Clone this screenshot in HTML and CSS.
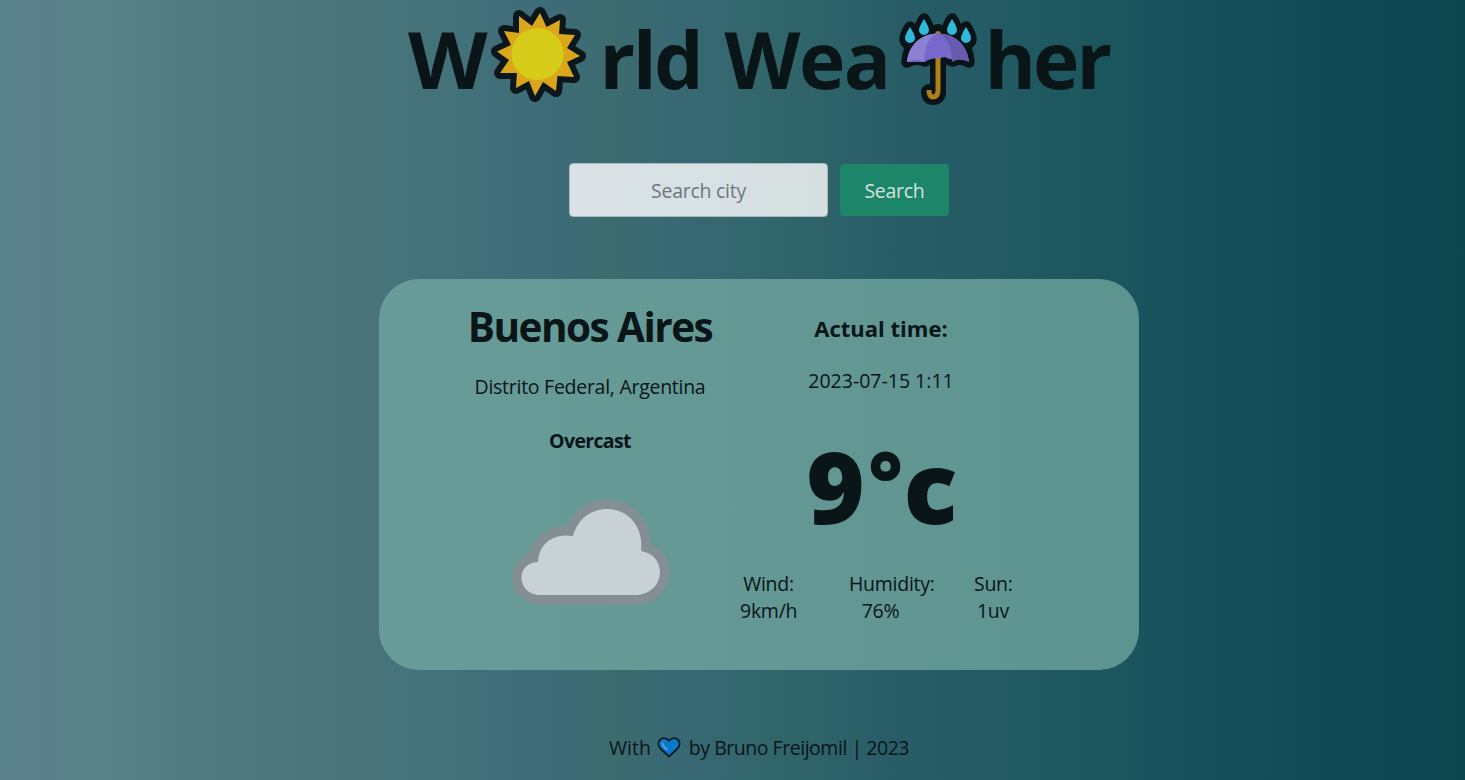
FILE: index.html
```html
<!DOCTYPE html>
<html lang="en">
<head>
<meta charset="utf-8">
<title>World Weather</title>
<link rel="stylesheet" href="styles.css">
</head>
<body>
<main class="page">
  <h1 class="title">
    <span class="t-w">W</span>
    <svg class="sun" viewBox="0 0 110 110" aria-label="sun"><path class="halo" d="M57 13 63.500 27 77 20 76 34 92 35 84 48 97 56 84 62 91 77 74.500 76 73 91 60 82 52 96 46 81 33 88 34 73 17 73 26 60 14 51.500 28 45 21 31 36 33 36 16 49 26Z"/><path class="rays" d="M57 13 63.500 27 77 20 76 34 92 35 84 48 97 56 84 62 91 77 74.500 76 73 91 60 82 52 96 46 81 33 88 34 73 17 73 26 60 14 51.500 28 45 21 31 36 33 36 16 49 26Z"/><circle cx="54.500" cy="54" r="26" fill="#d6cc19"/></svg>
    <span class="t-rld">rld</span>
    <span class="t-wea">Wea</span>
    <svg class="umbrella" viewBox="0 0 100 105" aria-label="umbrella with rain"><g class="halo"><path d="M21 22q5 8 5 12a5 5 0 0 1-10 0q0-4 5-12ZM35 14q5 8 5 12a5 5 0 0 1-10 0q0-4 5-12ZM63 14q5 8 5 12a5 5 0 0 1-10 0q0-4 5-12ZM77 22q5 8 5 12a5 5 0 0 1-10 0q0-4 5-12Z"/><path d="M18 57Q20 29 49 28 78 29 80 57 71 52 64 56 56 52 49 54 42 52 36 56 27 52 18 57Z"/><path class="handle-halo" d="M49 27V87q0 5-5 5-4 0-4-5"/></g>
    <path d="M21 22q5 8 5 11a5 5 0 0 1-10 0q0-3 5-11ZM35 14q5 8 5 11a5 5 0 0 1-10 0q0-3 5-11ZM63 14q5 8 5 11a5 5 0 0 1-10 0q0-3 5-11ZM77 22q5 8 5 11a5 5 0 0 1-10 0q0-3 5-11Z" fill="#31b9db"/>
    <path d="M49 29V85q0 7-5 7-4 0-4-7" fill="none" stroke="#b07f16" stroke-width="5"/><circle cx="49" cy="28.500" r="2.500" fill="#b07f16"/>
    <path d="M18 57C21 19 77 19 80 57 71 52 64 57 56 52 49 54 42 52 36 57 27 52 18 57Z" fill="#7769cb"/><path d="M18 57C20 40 32 29 48 28.500 38 34 35 45 35 57 27 52 18 57 18 57Z" fill="#8b81d2"/><path d="M80 57C78 40 66 29 50 28.500 60 34 63 45 63 57 71 52 80 57 80 57Z" fill="#675bae"/></svg>
    <span class="t-her">her</span>
  </h1>
  <form class="search">
    <input class="search-input" type="text" placeholder="Search city">
    <button class="search-button" type="button">Search</button>
  </form>
  <section class="card">
    <div class="place">
      <h2 class="city">Buenos Aires</h2>
      <p class="region">Distrito Federal, Argentina</p>
      <p class="condition">Overcast</p>
      <svg class="cloud" viewBox="0 0 160 112"><path d="M28 100C7 98 5 68 28 67 29 48 44 38 63 41 68 23 82 14 97 14 120 14 134 34 131 56 158 60 156 98 127 100Z" fill="#c8d1d5" stroke="#838f93" stroke-width="19" stroke-linejoin="round" paint-order="stroke"/></svg>
    </div>
    <div class="readings">
      <h3 class="time-label">Actual time:</h3>
      <p class="time">2023-07-15 1:11</p>
      <p class="temp">9<span class="degree">°</span>c</p>
      <dl class="stats">
        <div class="stat wind"><dt>Wind:</dt><dd>9km/h</dd></div>
        <div class="stat humidity"><dt>Humidity:</dt><dd>76%</dd></div>
        <div class="stat uv"><dt>Sun:</dt><dd>1uv</dd></div>
      </dl>
    </div>
  </section>
  <footer class="footer"><span class="f-with">With</span><svg class="heart" viewBox="0 0 24 21"><path d="M12 19.500 3 11C-2 4 6-2 12 3.500 18-2 26 4 21 11Z" fill="#0d78ca" stroke="#0b1b22" stroke-width="1.800" stroke-linejoin="round"/><path d="M5.500 6.500Q6 9.500 10 12.500" fill="none" stroke="#4da0df" stroke-width="2" stroke-linecap="round"/></svg><span class="f-by">by Bruno Freijomil | 2023</span></footer>
</main>
</body>
</html>
```
FILE: styles.css
```css
* { box-sizing: border-box; }
body {
  margin: 0;
  height: 780px;
  overflow: hidden;
  padding-left: 53px;
  color: #0a1518;
  font: 19.5px/27px "Open Sans", "Noto Sans", sans-serif;
  letter-spacing: -0.27px;
  background: linear-gradient(90deg, #5a828a 0, #597e8a 50px, #5a8388 80px, #527b80 200px, #4a757a 330px, #44727a 450px, #3d6b78 555px, #3c6c6e 610px, #386874 680px, #30666a 780px, #285d68 900px, #235a63 1000px, #1b565e 1100px, #184f5c 1210px, #104955 1330px, #0b464f 1465px);
}
h1, h2, h3, p, dl, dd { margin: 0; }
.page { display: flex; flex-direction: column; align-items: center; height: 780px; }
.page > * { flex: none; }
.title {
  display: flex;
  align-items: flex-start;
  width: 703px;
  height: 163px;
  font-size: 78.5px;
  line-height: 118px;
  font-weight: 700;
  letter-spacing: -1px;
}
.title > * { flex: none; }
.t-w { width: 75px; transform: scaleX(1.05); transform-origin: left; }
.t-rld { width: 125px; letter-spacing: -2.5px; }
.t-wea { width: 164px; letter-spacing: -1.5px; }
.t-her { margin-left: -4px; letter-spacing: -3px; }
.sun { width: 110px; height: 110px; margin-right: 7px; }
.umbrella { width: 100px; height: 105px; margin-top: 5px; }
.halo { fill: #0b171b; stroke: #0b171b; stroke-width: 12; stroke-linejoin: round; stroke-linecap: round; }
.umbrella .halo { fill: #081417; stroke: #081417; stroke-width: 11.5; }
.umbrella .handle-halo { fill: none; stroke-width: 16; }
.rays { fill: #dba61b; }
.search { display: flex; align-items: center; gap: 12px; width: 380px; height: 54px; }
.search-input {
  width: 259px; height: 54px; padding: 0;
  border: 1px solid #a9b8ba; border-radius: 4px;
  background: linear-gradient(90deg, #dae2e5, #d5dfe0);
  font: inherit; letter-spacing: inherit; text-align: center;
}
.search-input::placeholder { color: #6d787b; opacity: 1; }
.search-button {
  width: 109px; height: 52px; padding: 0; border: 0; border-radius: 4px;
  background: #1d8568; color: #d4e3df; font: inherit; letter-spacing: inherit;
}
.card {
  display: grid;
  grid-template-columns: 422px 1fr;
  width: 760px; height: 391px; margin-top: 62px;
  border-radius: 40px;
  background: linear-gradient(90deg, #689c98, #5e9490);
}
.place { display: flex; flex-direction: column; align-items: center; padding-top: 19px; }
.city { font-size: 40.5px; line-height: 58px; letter-spacing: -1.55px; }
.region { margin-top: 17px; }
.condition { margin-top: 27px; font-weight: 700; letter-spacing: -0.65px; }
.cloud { width: 160px; height: 112px; margin-top: 41px; filter: blur(0.6px); }
.readings { display: flex; flex-direction: column; align-items: center; width: 160px; padding-top: 33px; }
.time-label { font-size: 22px; line-height: 32px; white-space: nowrap; letter-spacing: 0; }
.time { margin-top: 23px; white-space: nowrap; letter-spacing: 0; }
.temp { height: 130px; margin-top: 26px; font-size: 100px; font-weight: 900; line-height: 130px; white-space: nowrap; letter-spacing: -1.5px; }
.degree { margin: 0 2px 0 5px; font-size: 82px; line-height: 0; vertical-align: 13px; }
.stats { display: flex; width: 282px; margin-top: 20px; }
.stat { text-align: center; white-space: nowrap; }
.wind { width: 57px; }
.humidity { width: 85px; margin-left: 52px; }
.humidity dd { padding-right: 22px; }
.uv { width: 38px; margin-left: 40px; }
.footer { display: flex; align-items: center; width: 300px; height: 27px; margin-top: 64px; white-space: nowrap; }
.f-with { width: 49px; letter-spacing: 0; }
.heart { flex: none; width: 24px; height: 21px; margin-right: 8px; }
.f-by { letter-spacing: -0.47px; }
```
